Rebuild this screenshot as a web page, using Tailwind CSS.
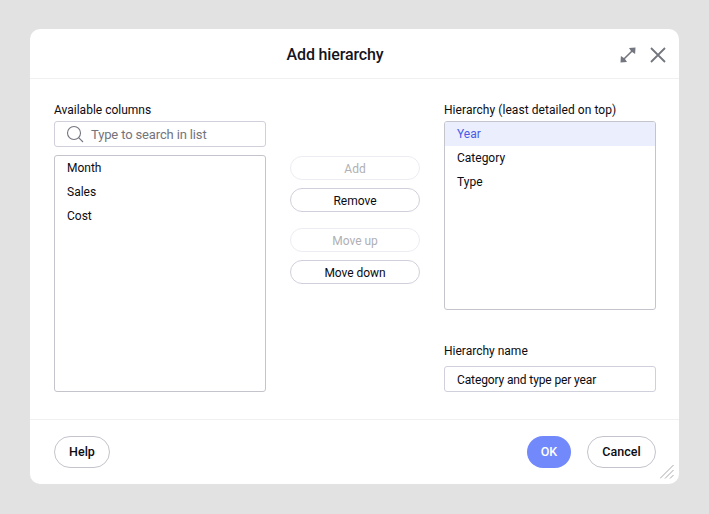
<!DOCTYPE html>
<html lang="en">
<head>
  <meta charset="UTF-8">
  <title>Add hierarchy</title>
  <script src="https://cdn.jsdelivr.net/npm/@tailwindcss/browser@4"></script>
</head>
<body class="bg-[#e2e2e2] h-[514px] overflow-hidden font-['Roboto',sans-serif] text-[12px] text-[#0b0b12]">
  <div class="pt-[29px] pl-[30px]">
    <div class="relative w-[649px] h-[455px] bg-white rounded-[10px] flex flex-col">

      <!-- header -->
      <div class="relative h-[50px] pr-[39px] pt-[2px] border-b border-[#f0f0f2] flex items-center justify-center shrink-0">
        <h1 class="text-[16px] tracking-[-0.15px] font-medium text-[#14141c]">Add hierarchy</h1>
        <svg class="absolute left-[590px] top-[18px]" width="16" height="16" viewBox="0 0 16 16" fill="#74767f">
          <path d="M15.5 .5 L9 .9 L11 3.9 L3.9 11 L.9 9 L.5 15.5 L7 15.1 L5 12.1 L12.1 5 L15.1 7 Z"/>
        </svg>
        <svg class="absolute left-[620px] top-[18px]" width="16" height="16" viewBox="0 0 16 16" fill="none" stroke="#74767f" stroke-width="1.8">
          <path d="M1 1 L15 15 M15 1 L1 15"/>
        </svg>
      </div>

      <!-- body -->
      <div class="h-[341px] border-b border-[#f0f0f2] pl-[24px] pt-[24px] flex shrink-0">
        <div class="w-[212px] flex flex-col">
          <label class="h-[18px] leading-[14px]">Available columns</label>
          <div class="h-[26px] border border-[#d0d0dc] rounded-[3px] flex items-center pl-[11px] gap-[7px] text-[13px] tracking-[-0.14px] text-[#74747c]">
            <svg width="18" height="18" viewBox="0 0 18 18" fill="none" stroke="#74767f" stroke-width="1.1">
              <circle cx="8" cy="8" r="6.5"/>
              <path d="M12.6 12.6 L17 17"/>
            </svg>
            <span class="pt-[1px]">Type to search in list</span>
          </div>
          <ul class="mt-[8px] h-[237px] border border-[#c4c4cc] rounded-[3px] py-[1px]">
            <li class="h-[24px] leading-[22px] pl-[12px]">Month</li>
            <li class="h-[24px] leading-[22px] pl-[12px]">Sales</li>
            <li class="h-[24px] leading-[22px] pl-[12px]">Cost</li>
          </ul>
        </div>

        <div class="ml-[24px] w-[130px] pt-[53px] flex flex-col">
          <button class="h-[24px] pt-[2px] rounded-full border border-[#ecedf2] text-[#b0b0b4]">Add</button>
          <button class="mt-[8px] h-[24px] pt-[2px] rounded-full border border-[#d0d0dc]">Remove</button>
          <button class="mt-[16px] h-[24px] pt-[1px] rounded-full border border-[#ecedf2] text-[#b0b0b4]">Move up</button>
          <button class="mt-[8px] h-[24px] pt-[2px] tracking-[-0.05px] rounded-full border border-[#d0d0dc]">Move down</button>
        </div>

        <div class="ml-[24px] w-[212px] flex flex-col">
          <label class="h-[18px] leading-[14px] tracking-[0.06px]">Hierarchy (least detailed on top)</label>
          <ul class="h-[189px] border border-[#c4c4cc] rounded-[3px] overflow-hidden">
            <li class="h-[24px] leading-[24px] pl-[12px] bg-[#ebeefd] text-[#4a5ae8]">Year</li>
            <li class="h-[24px] leading-[24px] pl-[12px]">Category</li>
            <li class="h-[24px] leading-[24px] pl-[12px]">Type</li>
          </ul>
          <label class="mt-[34px] h-[22px] leading-[14px]">Hierarchy name</label>
          <div class="h-[26px] border border-[#d0d0dc] rounded-[3px] pl-[12px] leading-[26px] tracking-[-0.12px]">Category and type per year</div>
        </div>
      </div>

      <!-- footer -->
      <div class="flex-1 flex items-start pt-[16px] pl-[24px] pr-[23px] font-medium text-[12.5px]">
        <button class="w-[56px] h-[32px] rounded-full border border-[#c4c4cc]">Help</button>
        <button class="ml-auto w-[44px] h-[32px] rounded-full bg-[#7289fb] text-white">OK</button>
        <button class="ml-[16px] w-[69px] h-[32px] rounded-full border border-[#c4c4cc]">Cancel</button>
      </div>

      <svg class="absolute left-[630px] top-[436px]" width="14" height="14" viewBox="0 0 14 14" fill="none" stroke="#a9a9ad" stroke-width="1">
        <path d="M0 13.5 L13.5 0 M5 13.5 L13.5 5 M10 13.5 L13.5 10"/>
      </svg>
    </div>
  </div>
</body>
</html>
